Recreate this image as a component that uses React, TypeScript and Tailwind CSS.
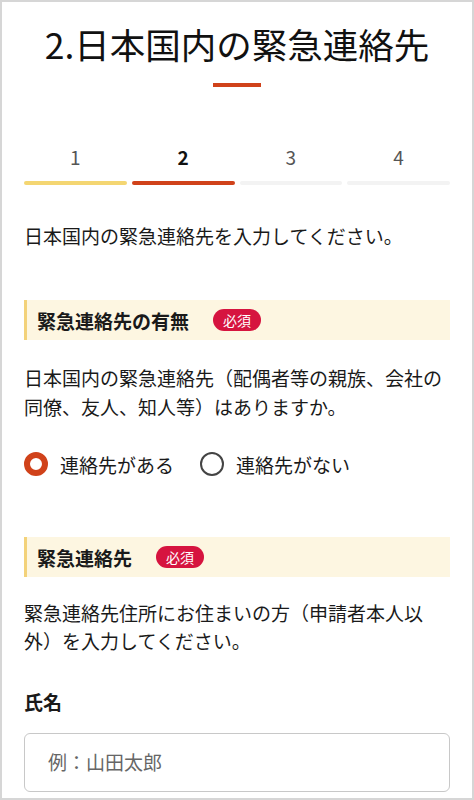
import React from 'react'

const font = { fontFamily: '"Noto Sans CJK JP", "Noto Sans", sans-serif' }

const SectionHeader = ({ title }: { title: string }) => (
    <div className="flex items-center h-[40px] bg-[#fdf6e1] border-l-[3px] border-[#f3d27a] pl-[10px]">
        <span className="text-[19px] font-bold text-[#1a1a1a] leading-none">{title}</span>
        <span className="ml-[24px] h-[22px] px-[10px] rounded-full bg-[#d6143f] text-white text-[14px] leading-[22px]">必須</span>
    </div>
)

const App = () => {
    const steps = [
        { n: '1', bar: 'bg-[#f4d672]', text: 'text-[#555] font-normal' },
        { n: '2', bar: 'bg-[#d0421a]', text: 'text-[#111] font-bold' },
        { n: '3', bar: 'bg-[#f3f3f3]', text: 'text-[#555] font-normal' },
        { n: '4', bar: 'bg-[#f3f3f3]', text: 'text-[#555] font-normal' },
    ]

    return (
        <div className="w-[474px] h-[800px] overflow-hidden bg-white border-2 border-[#d6d6d6]" style={font}>
            <div className="flex flex-col px-[22px] text-[#1a1a1a]">
                <h1 className="pt-[20px] text-center text-[35.5px] leading-[44px] font-normal text-[#111]">2.日本国内の緊急連絡先</h1>
                <div className="mt-[17px] mx-auto w-[48px] h-[4px] bg-[#d0421a]" />

                <div className="mt-[56px] grid grid-cols-4 gap-x-[5px]">
                    {steps.map((s) => (
                        <div key={s.n} className="flex flex-col items-center">
                            <span className={`text-[19px] leading-[28px] ${s.text}`}>{s.n}</span>
                            <div className={`mt-[10px] w-full h-[4px] rounded-full ${s.bar}`} />
                        </div>
                    ))}
                </div>

                <p className="mt-[36px] text-[19px] leading-[29px]">日本国内の緊急連絡先を入力してください。</p>

                <div className="mt-[50px]">
                    <SectionHeader title="緊急連絡先の有無" />
                </div>
                <p className="mt-[23px] text-[19px] leading-[29px]">日本国内の緊急連絡先（配偶者等の親族、会社の同僚、友人、知人等）はありますか。</p>

                <div className="mt-[31px] flex items-center h-[24px]">
                    <label className="flex items-center gap-[12px]">
                        <span className="w-[24px] h-[24px] rounded-full border-[6px] border-[#d0421a] bg-white" />
                        <span className="text-[19px] leading-none">連絡先がある</span>
                    </label>
                    <label className="ml-[26px] flex items-center gap-[12px]">
                        <span className="w-[24px] h-[24px] rounded-full border-2 border-[#444] bg-white" />
                        <span className="text-[19px] leading-none">連絡先がない</span>
                    </label>
                </div>

                <div className="mt-[61px]">
                    <SectionHeader title="緊急連絡先" />
                </div>
                <p className="mt-[22px] text-[19px] leading-[28px]">緊急連絡先住所にお住まいの方（申請者本人以外）を入力してください。</p>

                <label className="mt-[32px] text-[19px] leading-[29px] font-bold">氏名</label>
                <div className="mt-[17px] h-[59px] rounded-[6px] border border-[#c8c8c8] flex items-center px-[23px]">
                    <span className="text-[19px] text-[#666]">例：山田太郎</span>
                </div>
            </div>
        </div>
    )
}

export default App
